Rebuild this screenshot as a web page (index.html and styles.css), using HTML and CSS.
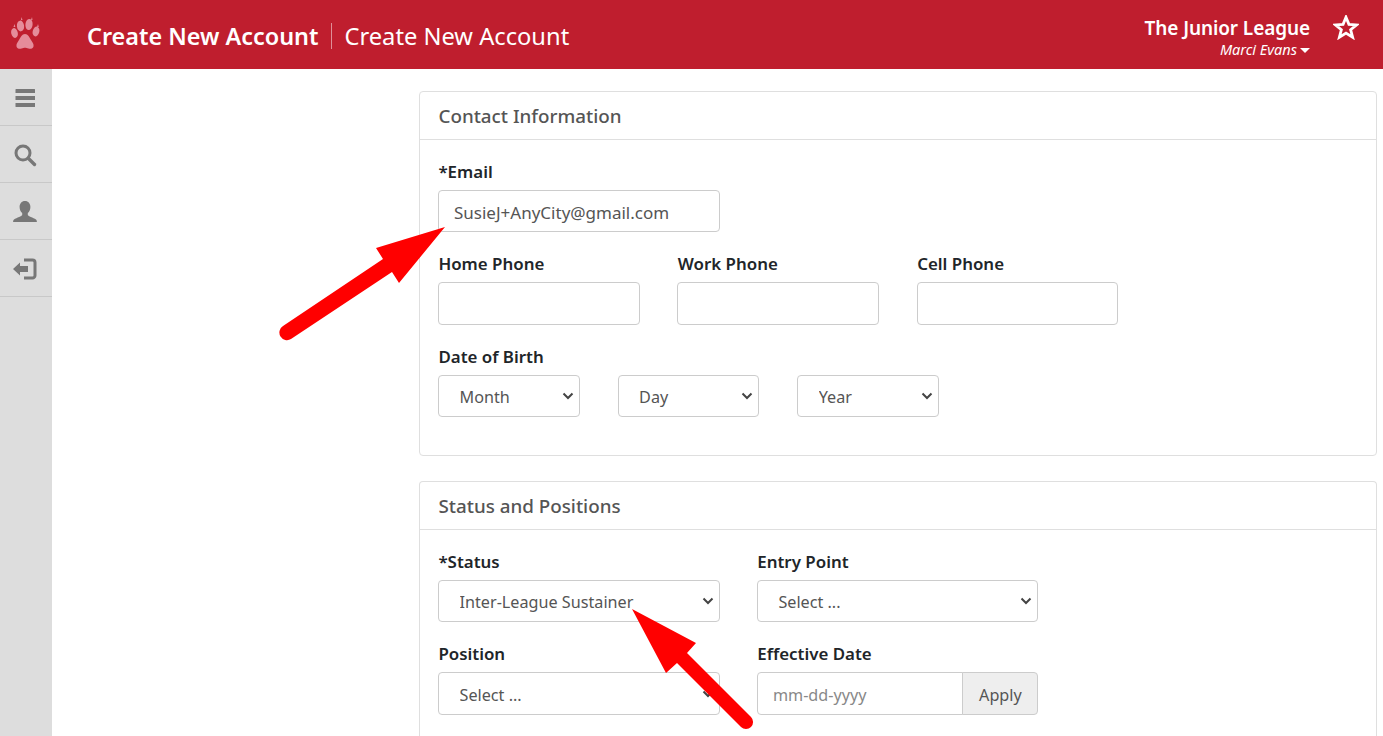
FILE: index.html
```html
<!DOCTYPE html>
<html lang="en">
<head>
<meta charset="utf-8">
<title>Create New Account</title>
<link rel="stylesheet" href="styles.css">
</head>
<body>
<header class="topbar">
  <div class="brand">
    <svg class="paw" viewBox="0 0 30 36" width="30" height="36">
      <g fill="#e58c9a">
        <ellipse cx="4.500" cy="17" rx="3.300" ry="5" transform="rotate(-14 4.500 17)"/>
        <ellipse cx="10.500" cy="10" rx="3.600" ry="5.400" transform="rotate(-6 10.500 10)"/>
        <ellipse cx="19" cy="8.500" rx="3.600" ry="5.600" transform="rotate(6 19 8.500)"/>
        <ellipse cx="26" cy="15.500" rx="3.300" ry="5" transform="rotate(14 26 15.500)"/>
        <path d="M15 18c3 0 4.500 3.500 6 6 1.500 2.500 3 4 2.500 6.500-.5 2.500-3.500 2.500-5 2-1.500-.5-2.500-.8-3.500-.8s-2 .3-3.500.8c-1.500.5-4.500.5-5-2C6 28 7.500 26.500 9 24c1.500-2.500 3-6 6-6z"/>
        <path d="M3.500 11l1-3 .8 3zM11 4l.5-3 1 3zM21 4l1-3 .5 3zM27 11l1-3 .8 3z"/>
      </g>
    </svg>
    <h1 class="title"><span class="title-main">Create New Account</span><span class="title-sub">Create New Account</span></h1>
  </div>
  <div class="account">
    <div class="account-text">
      <div class="league">The Junior League</div>
      <div class="user">Marci Evans<span class="caret"></span></div>
    </div>
    <svg class="star" viewBox="1 1.500 24 23" width="26" height="25">
      <path d="M13 3.500l2.700 6.600 7.100.5-5.500 4.500 1.800 6.900-6.100-3.800-6.100 3.800 1.800-6.900-5.500-4.500 7.100-.5z" fill="none" stroke="#fff" stroke-width="2.600"/>
    </svg>
  </div>
</header>
<div class="shell">
  <nav class="sidebar">
    <a class="side-item">
      <svg viewBox="0 0 20 20" width="20" height="20"><path fill="#777" d="M1 1h18.500a.5.500 0 0 1 .5.500v3.500H.5V1.500A.5.500 0 0 1 1 1zM.5 8h19.500v4H.5zM.5 15H20v3.500a.5.500 0 0 1-.5.500H1a.5.500 0 0 1-.5-.5z"/></svg>
    </a>
    <a class="side-item">
      <svg viewBox="0 0 24 24" width="24" height="24"><circle cx="10" cy="10" r="7" fill="none" stroke="#777" stroke-width="3"/><path d="M15.500 15.500l6 6" stroke="#777" stroke-width="3.400" stroke-linecap="round"/></svg>
    </a>
    <a class="side-item">
      <svg viewBox="0 0 24 24" width="24" height="24"><path fill="#777" d="M12 1c3.400 0 5.400 2.700 5.400 6 0 2.500-1 4.800-2.600 6v2c0 1 5.500 2.700 8.200 4.500.6.400.9 1.700.9 2.500H.1c0-.8.300-2.100.9-2.500C3.700 17.700 9.200 16 9.200 15v-2C7.600 11.800 6.600 9.500 6.600 7c0-3.300 2-6 5.400-6z"/></svg>
    </a>
    <a class="side-item">
      <svg viewBox="0 0 26 24" width="26" height="24"><path fill="none" stroke="#777" stroke-width="3" d="M12 3h8.500a2.500 2.500 0 0 1 2.500 2.500v13a2.500 2.500 0 0 1-2.500 2.500H12"/><path fill="#777" d="M1 12l7-6.500V9h8v6H8v3.500z"/></svg>
    </a>
  </nav>
  <main class="content">
    <section class="card card-contact">
      <h2 class="card-head">Contact Information</h2>
      <div class="card-body">
        <div class="row">
          <div class="field w-wide"><label class="lbl">*Email</label><input class="ctl ctl-email" type="text" value="SusieJ+AnyCity@gmail.com"></div>
        </div>
        <div class="row">
          <div class="field w-mid"><label class="lbl">Home Phone</label><input class="ctl tall" type="text"></div>
          <div class="field w-mid"><label class="lbl">Work Phone</label><input class="ctl tall" type="text"></div>
          <div class="field w-mid"><label class="lbl">Cell Phone</label><input class="ctl tall" type="text"></div>
        </div>
        <div class="row">
          <div class="field w-full">
            <label class="lbl">Date of Birth</label>
            <div class="dob">
              <select class="ctl sel"><option>Month</option></select>
              <select class="ctl sel"><option>Day</option></select>
              <select class="ctl sel"><option>Year</option></select>
            </div>
          </div>
        </div>
      </div>
    </section>
    <section class="card card-status">
      <h2 class="card-head">Status and Positions</h2>
      <div class="card-body">
        <div class="row row-wide">
          <div class="field w-wide"><label class="lbl">*Status</label><select class="ctl sel"><option>Inter-League Sustainer</option></select></div>
          <div class="field w-wide"><label class="lbl">Entry Point</label><select class="ctl sel"><option>Select ...</option></select></div>
        </div>
        <div class="row row-wide">
          <div class="field w-wide"><label class="lbl">Position</label><select class="ctl sel tall"><option>Select ...</option></select></div>
          <div class="field w-wide"><label class="lbl">Effective Date</label>
            <div class="group"><input class="ctl tall group-input" type="text" placeholder="mm-dd-yyyy"><button class="apply" type="button">Apply</button></div>
          </div>
        </div>
      </div>
    </section>
  </main>
</div>
<svg class="arrows" viewBox="0 0 1383 736" width="1383" height="736">
  <path fill="#f00" d="M445 227L376 248 383 259 283 326a6.800 6.800 0 0 0 8 13L392 272 399 283z"/>
  <path fill="#f00" d="M632 609L696 643 687 653 751 717a6.800 6.800 0 0 1-10 10L677 663 666 673z"/>
</svg>
</body>
</html>
```
FILE: styles.css
```css
* { box-sizing: border-box; }
html, body { margin: 0; height: 736px; overflow: hidden; }
body { background: #fff; font-family: "Noto Sans", "Open Sans", sans-serif; color: #212529; position: relative; }

.topbar { height: 69px; background: #bf1e2e; color: #fff; display: flex; justify-content: space-between; align-items: center; padding: 0 24px 0 10px; }
.brand { display: flex; align-items: center; }
.paw { display: block; margin-right: 47px; margin-top: -1px; }
.title { margin: 0; font-size: 23.700px; font-weight: 400; display: flex; align-items: center; line-height: 26px; padding-top: 2px; }
.title-main { font-size: 23.400px; font-weight: 600; padding-right: 13px; border-right: 1px solid rgba(255,255,255,.5); }
.title-sub { padding-left: 12px; }
.account { display: flex; align-items: flex-start; gap: 23px; }
.account-text { text-align: right; padding-top: 7px; }
.league { font-size: 19px; font-weight: 600; line-height: 22px; letter-spacing: -.1px; }
.user { font-size: 14.500px; font-style: italic; line-height: 20px; }
.caret { display: inline-block; margin-left: 3px; border-left: 5px solid transparent; border-right: 5px solid transparent; border-top: 5px solid #fff; vertical-align: 2px; }
.star { display: block; margin-top: 5px; }

.shell { display: flex; height: 667px; }
.sidebar { width: 52px; flex: none; background: #ddd; }
.side-item { height: 57px; display: flex; align-items: center; justify-content: center; border-bottom: 1px solid #c8c8c8; padding: 2px 3px 0 0; }

.content { flex: 1; padding: 22px 6px 0 367px; min-width: 0; }
.card { border: 1px solid #dfdfdf; border-radius: 4px; background: #fff; margin-bottom: 25px; }
.card-contact { height: 365px; }
.card-status { height: 255px; margin-bottom: 0; border-bottom: 0; border-radius: 4px 4px 0 0; }
.card-head { margin: 0; height: 48px; padding: 0 18px 0 18.500px; font-size: 18.800px; font-weight: 500; line-height: 48px; color: #555; border-bottom: 1px solid #dfdfdf; }
.card-body { padding: 21px 18px 0; display: flex; flex-direction: column; gap: 21px; }
.row { display: flex; gap: 37.800px; }
.row-wide { gap: 37.400px; }
.field { display: flex; flex-direction: column; }
.w-wide { width: 281.500px; }
.w-mid { width: 201.600px; }
.w-full { width: 100%; }
.lbl { font-size: 16.900px; font-weight: 600; line-height: 22px; margin-bottom: 7px; padding-left: .4px; color: #212529; }
.ctl { height: 42px; width: 100%; border: 1px solid #ccc; border-radius: 4px; background: #fff; padding: 2px 15px 0; font: 400 16.200px "Noto Sans", "Open Sans", sans-serif; color: #555; outline: none; }
.ctl.tall { height: 43px; }
.ctl-email { font-size: 17px; }
.ctl::placeholder { color: #888; }
.sel { appearance: none; -webkit-appearance: none; padding-left: 20.500px; background-repeat: no-repeat; background-position: right 5px center; background-size: 12px 8px; background-image: url("data:image/svg+xml,%3Csvg xmlns='http://www.w3.org/2000/svg' viewBox='0 0 12 8'%3E%3Cpath d='M1.500 1.500L6 6l4.500-4.500' fill='none' stroke='%23444' stroke-width='2'/%3E%3C/svg%3E"); }
.dob { display: flex; gap: 38px; }
.dob .ctl { width: 141.600px; flex: none; }
.group { display: flex; }
.group-input { flex: 1; min-width: 0; border-radius: 4px 0 0 4px; }
.apply { width: 76px; height: 43px; margin-left: -1px; border: 1px solid #ccc; border-radius: 0 4px 4px 0; background: #eee; font: 400 16.200px "Noto Sans", "Open Sans", sans-serif; color: #555; padding: 2px 0 0; }

.arrows { position: absolute; left: 0; top: 0; pointer-events: none; }
```
